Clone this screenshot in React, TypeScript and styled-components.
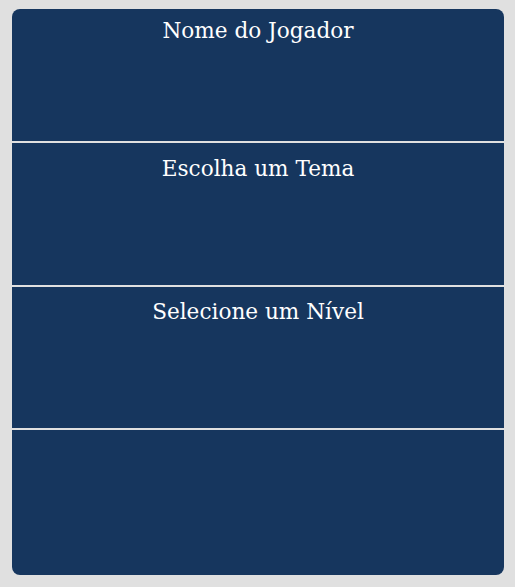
import React from "react";
import styled, { createGlobalStyle } from "styled-components";

const GlobalStyle = createGlobalStyle`
  html, body {
    margin: 0;
    padding: 0;
    background: #e0e0e0;
  }
`;

const Page = styled.div`
  padding: 9px 11px 12px 12px;
  font-family: "DejaVu Serif", "Liberation Serif", serif;
`;

const Card = styled.div`
  display: flex;
  flex-direction: column;
  gap: 2px;
  height: 566px;
  background: #e0e0e0;
  border-radius: 8px;
  overflow: hidden;
`;

const Section = styled.section<{ $height: number; $top: number }>`
  height: ${(p) => p.$height}px;
  flex: none;
  padding-top: ${(p) => p.$top}px;
  box-sizing: border-box;
  background: #16365e;
`;

const Title = styled.h2`
  margin: 0;
  text-align: center;
  color: #ffffff;
  font-size: 21.6px;
  font-weight: normal;
  line-height: 24px;
`;

const steps = [
  { title: "Nome do Jogador", height: 132, top: 10 },
  { title: "Escolha um Tema", height: 142, top: 14 },
  { title: "Selecione um Nível", height: 141, top: 13 },
  { title: "", height: 145, top: 13 },
];

const App = () => (
  <Page>
    <GlobalStyle />
    <Card>
      {steps.map((s, i) => (
        <Section key={i} $height={s.height} $top={s.top}>
          {s.title && <Title>{s.title}</Title>}
        </Section>
      ))}
    </Card>
  </Page>
);

export default App;
